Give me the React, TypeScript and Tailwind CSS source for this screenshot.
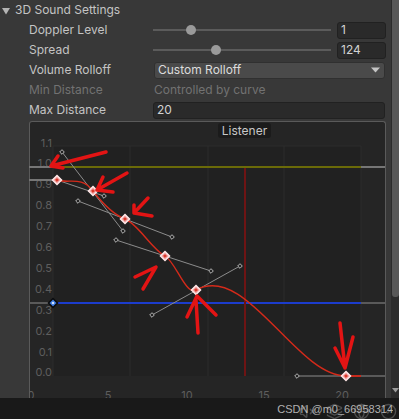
import React from "react";
import { VolumeX, Layers, Globe, CircleCheck } from "lucide-react";

function Diamond({ x, y, r, fill, stroke, sw = 1 }: { x: number; y: number; r: number; fill: string; stroke: string; sw?: number }) {
  return (
    <polygon
      points={`${x},${y - r} ${x + r},${y} ${x},${y + r} ${x - r},${y}`}
      fill={fill}
      stroke={stroke}
      strokeWidth={sw}
    />
  );
}

function Key({ x, y }: { x: number; y: number }) {
  return (
    <g>
      <Diamond x={x} y={y} r={4.5} fill="#f0a0a0" stroke="#ffe8e8" sw={1.5} />
      <Diamond x={x} y={y} r={1.6} fill="#d83020" stroke="#d83020" sw={0.5} />
    </g>
  );
}

function Handle({ x1, y1, x2, y2, a = true, b = true }: { x1: number; y1: number; x2: number; y2: number; a?: boolean; b?: boolean }) {
  return (
    <g>
      <line x1={x1} y1={y1} x2={x2} y2={y2} stroke="#8c8c8c" strokeWidth={1} />
      {a && <Diamond x={x1} y={y1} r={2.3} fill="#222" stroke="#b5b5b5" sw={1} />}
      {b && <Diamond x={x2} y={y2} r={2.3} fill="#222" stroke="#b5b5b5" sw={1} />}
    </g>
  );
}

function Slider({ pos }: { pos: number }) {
  return (
    <div className="relative w-[178px] h-[20px] flex items-center">
      <div className="w-full h-[2px] bg-[#5b5b5b]" />
      <div
        className="absolute top-[5px] w-[10px] h-[10px] rounded-full bg-[#9a9a9a]"
        style={{ left: pos - 5 }}
      />
    </div>
  );
}

function Field({ value, className }: { value: string; className: string }) {
  return (
    <div className={`h-[17px] rounded-[3px] bg-[#2a2a2a] border border-[#212121] flex items-center pl-[3px] text-[12px] text-[#d2d2d2] ${className}`}>
      {value}
    </div>
  );
}

export default function App() {
  const yLabels = ["1.1", "1.0", "0.9", "0.8", "0.7", "0.6", "0.5", "0.4", "0.3", "0.2", "0.1", "0.0"];
  const xLabels: [string, number][] = [["0", 31], ["5", 108], ["10", 187], ["15", 264], ["20", 342]];
  const curve =
    "M57 180 C69 184 81 175.4 93 191 C103.7 204.9 114.3 214.9 125 219 C138.3 224.1 151.7 249.1 165 256 C175.3 261.3 185.7 295.7 196 290 C246 262.2 296 376 346 376";
  const red = "#e31414";
  return (
    <div className="w-[399px] h-[419px] flex flex-col bg-[#383838] overflow-hidden font-[Inter,sans-serif] text-[12px] text-[#c4c4c4]">
      <div className="h-[398px] flex">
        <div className="w-[391px] flex flex-col">
          <div className="h-[20px] flex items-center pl-[2px]">
            <svg width="8" height="8" viewBox="0 0 8 8" className="mr-[5px] mt-[1px]">
              <polygon points="0,1 8,1 4,7.5" fill="#b4b4b4" />
            </svg>
            <span>3D Sound Settings</span>
          </div>
          <div className="h-[20px] flex items-center pl-[29px]">
            <div className="w-[124px]">Doppler Level</div>
            <Slider pos={38} />
            <Field value="1" className="ml-[6px] w-[49px]" />
          </div>
          <div className="h-[20px] flex items-center pl-[29px]">
            <div className="w-[124px]">Spread</div>
            <Slider pos={63} />
            <Field value="124" className="ml-[6px] w-[49px]" />
          </div>
          <div className="h-[20px] flex items-center pl-[29px]">
            <div className="w-[125px]">Volume Rolloff</div>
            <div className="w-[231px] h-[17px] rounded-[3px] bg-[#4a4a4a] border border-[#303030] flex items-center justify-between pl-[3px] pr-[4px] text-[#dcdcdc]">
              <span>Custom Rolloff</span>
              <svg width="9" height="6" viewBox="0 0 9 6">
                <polygon points="0,0.5 9,0.5 4.5,5.5" fill="#c4c4c4" />
              </svg>
            </div>
          </div>
          <div className="h-[20px] flex items-center pl-[29px] text-[#727272]">
            <div className="w-[125px]">Min Distance</div>
            <div>Controlled by curve</div>
          </div>
          <div className="h-[20px] flex items-center pl-[29px]">
            <div className="w-[124px]">Max Distance</div>
            <Field value="20" className="w-[232px]" />
          </div>
          <div className="relative mt-[1px] ml-[29px] w-[357px] h-[277px] border-t border-l border-r border-[#5a5a5a] rounded-t-[3px] bg-[#252525]">
            <svg
              className="absolute left-[-1px] top-[-1px]"
              width="357"
              height="277"
              viewBox="29 121 357 277"
            >
              <rect x="53" y="146" width="308" height="230" fill="#212121" />
              {[53, 130, 208, 284, 361].map((x) => (
                <line key={x} x1={x} y1={146} x2={x} y2={376} stroke="#2c2c2c" strokeWidth={1} />
              ))}
              <line x1="53" y1="146" x2="361" y2="146" stroke="#2c2c2c" strokeWidth={1} />
              {yLabels.map((l, i) => (
                <text
                  key={l}
                  x={52}
                  y={146.5 + i * 20.9}
                  textAnchor="end"
                  fontSize="11"
                  fill="#5e5e5e"
                  fontFamily="Inter, sans-serif"
                >
                  {l}
                </text>
              ))}
              {xLabels.map(([l, x]) => (
                <text key={l} x={x} y={399} textAnchor="middle" fontSize="11" fill="#5e5e5e" fontFamily="Inter, sans-serif">
                  {l}
                </text>
              ))}
              {/* horizontal curves */}
              <line x1="29" y1="167" x2="53" y2="167" stroke="#767676" strokeWidth={2} />
              <line x1="53" y1="167" x2="361" y2="167" stroke="#6a6a08" strokeWidth={2} />
              <line x1="361" y1="167" x2="385" y2="167" stroke="#767676" strokeWidth={2} />
              <line x1="29" y1="180" x2="57" y2="180" stroke="#767676" strokeWidth={2} />
              <line x1="29" y1="303" x2="53" y2="303" stroke="#5a5a5a" strokeWidth={2} />
              <line x1="53" y1="303" x2="361" y2="303" stroke="#1c3ccc" strokeWidth={2} />
              <line x1="361" y1="303" x2="385" y2="303" stroke="#5a5a5a" strokeWidth={2} />
              <line x1="361" y1="376" x2="385" y2="376" stroke="#5a5a5a" strokeWidth={2} />
              <line x1="346" y1="376" x2="361" y2="376" stroke="#c82a1c" strokeWidth={2} />
              {/* listener */}
              <line x1="245" y1="168" x2="245" y2="376" stroke="#6e1414" strokeWidth={2} />
              {/* tangents */}
              <Handle x1={57} y1={180} x2={104} y2={196} a={false} />
              <Handle x1={62} y1={152} x2={123} y2={231} />
              <Handle x1={78} y1={201} x2={172} y2={237} />
              <Handle x1={116} y1={240} x2={211} y2={271} />
              <Handle x1={152} y1={315} x2={240} y2={266} />
              <Handle x1={297} y1={376} x2={346} y2={376} b={false} />
              <path d={curve} fill="none" stroke="#d42a1a" strokeWidth={1.4} />
              <Key x={57} y={180} />
              <Key x={93} y={191} />
              <Key x={125} y={219} />
              <Key x={165} y={256} />
              <Key x={196} y={290} />
              <Key x={346} y={376} />
              <Diamond x={53} y={303} r={4.5} fill="#3a78e0" stroke="#0a0a0a" sw={1.5} />
              <circle cx={53} cy={303} r={1.3} fill="#cfe0ff" />
              {/* hand drawn annotations */}
              <g fill="none" stroke={red} strokeWidth={3.5} strokeLinecap="round" strokeLinejoin="round">
                <path d="M106 152 L51 166 M58 156 L51 166 L63 168" />
                <path d="M127 173 L97 190 M103 177 L97 190 L113 192" />
                <path d="M148 198 L134 213 M134 205 L134 213 L152 216" />
                <path d="M135 277 L156 267 L143 289" />
                <path d="M198 333 L196 300 M187 317 L197 296 L216 315" />
                <path d="M340 323 L345 368 M335 348 L345 368 L353 337" />
              </g>
            </svg>
            <div className="absolute left-[188px] top-[1px] w-[53px] h-[15px] rounded-[3px] bg-[#1b1b1b] flex items-center justify-center text-[12px] text-[#c8c8c8]">
              Listener
            </div>
          </div>
        </div>
        <div className="relative w-[8px] bg-[#2c2c2c]">
          <div className="ml-[1px] w-[7px] h-[297px] bg-[#585858] rounded-b-[3px]" />
          <svg className="absolute left-[1px] top-[388px]" width="7" height="5" viewBox="0 0 7 5">
            <polygon points="0,0 7,0 3.5,4.5" fill="#9a9a9a" />
          </svg>
        </div>
      </div>
      <div className="relative h-[21px] bg-[#191919] flex items-start justify-end pr-[2px] pt-[5px] gap-[10px]">
        <VolumeX size={17} color="#4c4c4c" />
        <Layers size={17} color="#4c4c4c" />
        <Globe size={17} color="#4c4c4c" />
        <CircleCheck size={17} color="#4c4c4c" />
        <div className="absolute right-[6px] top-[3px] text-[11px] text-[#d6d6d6] opacity-80 font-[Arial,'Liberation_Sans',sans-serif]">
          CSDN @m0_66958314
        </div>
      </div>
    </div>
  );
}
